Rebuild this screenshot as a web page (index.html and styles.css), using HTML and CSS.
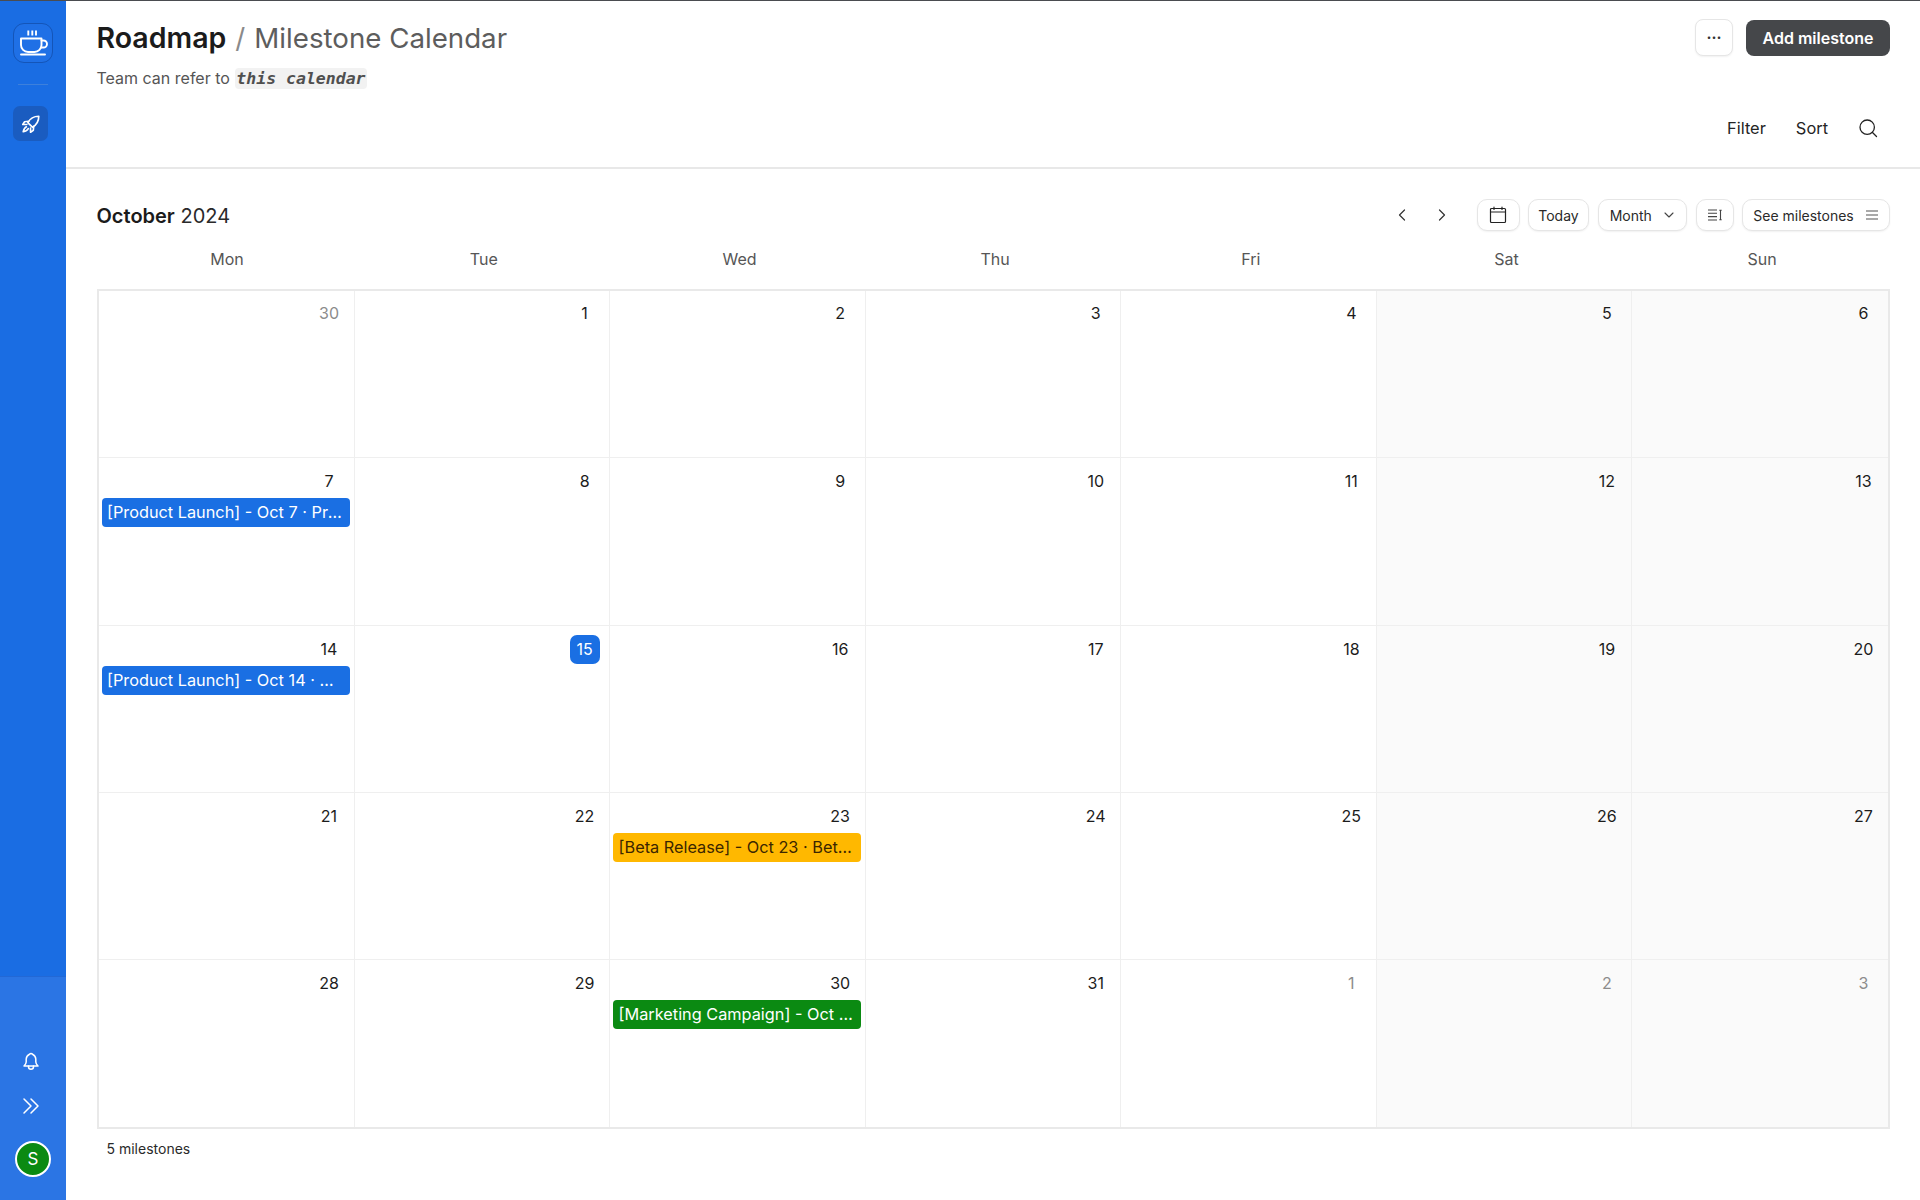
FILE: index.html
```html
<!DOCTYPE html>
<html lang="en">
<head>
<meta charset="utf-8">
<title>Milestone Calendar</title>
<link rel="stylesheet" href="styles.css">
</head>
<body>
<div class="app">
  <aside class="sidebar">
    <div class="side-top">
      <div class="logo">
        <svg width="30" height="30" viewBox="0 0 30 30" fill="none" stroke="#fff" stroke-width="1.900" stroke-linecap="round" stroke-linejoin="round"><path d="M3 10.500h20.500v6.500a7 7 0 0 1-7 7h-6.500a7 7 0 0 1-7-7z"/><path d="M23.500 12.500h2a3.500 3.500 0 0 1 0 7h-2.300"/><path d="M3 26.500h24"/><path d="M10.300 2.500v5M14.300 2.500v5M18 2.500v5" stroke-linecap="butt"/></svg>
      </div>
      <div class="side-rule"></div>
      <div class="nav-active">
        <svg width="22" height="22" viewBox="0 0 24 24" fill="none" stroke="#fff" stroke-width="1.800" stroke-linecap="round" stroke-linejoin="round"><path d="M20.500 3.500C15 3.500 11 6 8.500 10.500l5 5C18 13 20.500 9 20.500 3.500z"/><path d="M9.500 9L5 9.500 3 12.500h4.500"/><path d="M15 14.500L14.500 19l-3 2v-4.500"/><path d="M7 15c-2 1-3 3.500-3.500 5.500C5.500 20 8 19 9 17"/></svg>
      </div>
    </div>
    <div class="side-bottom">
      <svg class="side-icon" width="18" height="20" viewBox="0 0 18 20" fill="none" stroke="#fff" stroke-width="1.500" stroke-linecap="round" stroke-linejoin="round"><path d="M7.500 2.200a2 2 0 0 1 3 0a5.500 5.500 0 0 1 3.300 4.800v3c.1 1.500.8 2.700 2.200 4H2c1.400-1.300 2.100-2.500 2.200-4V7a5.500 5.500 0 0 1 3.300-4.800"/><path d="M6.500 14v.8a2.500 2.500 0 0 0 5 0V14"/></svg>
      <svg class="side-icon side-icon-gap" width="18" height="18" viewBox="0 0 18 18" fill="none" stroke="#fff" stroke-width="1.500" stroke-linecap="round" stroke-linejoin="round"><path d="M2 2l7 7-7 7"/><path d="M9 2l7 7-7 7"/></svg>
      <div class="avatar">S</div>
    </div>
  </aside>
  <main class="main">
    <header class="head">
      <div class="head-top">
        <div>
          <h1 class="title"><strong>Roadmap</strong><span class="slash">/</span><span class="sub">Milestone Calendar</span></h1>
          <p class="desc">Team can refer to <code class="code">this calendar</code></p>
        </div>
        <div class="head-actions">
          <button class="more-btn">···</button>
          <button class="add-btn">Add milestone</button>
        </div>
      </div>
      <div class="head-tools">
        <span class="tool">Filter</span>
        <span class="tool">Sort</span>
        <svg width="20" height="20" viewBox="0 0 20 20" fill="none" stroke="#222" stroke-width="1.300" stroke-linecap="round"><circle cx="9.200" cy="9.200" r="7.200"/><path d="M14.500 14.500l4 4"/></svg>
      </div>
    </header>
    <section class="cal">
      <div class="cal-bar">
        <div class="month"><strong>October</strong> 2024</div>
        <div class="cal-controls">
          <svg class="chev" width="12" height="14" viewBox="0 0 12 14" fill="none" stroke="#333" stroke-width="1.200" stroke-linecap="round" stroke-linejoin="round"><path d="M8.500 2L3.500 7l5 5"/></svg>
          <svg class="chev chev-next" width="12" height="14" viewBox="0 0 12 14" fill="none" stroke="#333" stroke-width="1.200" stroke-linecap="round" stroke-linejoin="round"><path d="M3.500 2l5 5-5 5"/></svg>
          <button class="pill pill-cal"><svg width="18" height="18" viewBox="0 0 18 18" fill="none" stroke="#222" stroke-width="1.200" stroke-linecap="round"><rect x="1.500" y="2.500" width="15" height="14" rx="1"/><path d="M1.500 6h15M5 1.200v2.300M13 1.200v2.300"/></svg></button>
          <button class="pill pill-today">Today</button>
          <button class="pill pill-month">Month <svg width="12" height="8" viewBox="0 0 12 8" fill="none" stroke="#444" stroke-width="1.100" stroke-linecap="round" stroke-linejoin="round"><path d="M2 2l4 4 4-4"/></svg></button>
          <button class="pill pill-icon"><svg width="14" height="12" viewBox="0 0 14 12" fill="none" stroke="#444" stroke-width="1.100"><path d="M0 1h9M0 4.300h9M0 7.600h9M0 11h9"/><path d="M12.500 1v10M11.300 1.200h2.400M11.300 10.800h2.400"/></svg></button>
          <button class="pill pill-see">See milestones <svg width="12" height="10" viewBox="0 0 12 10" fill="none" stroke="#555" stroke-width="1.100"><path d="M0 1h12M0 5h12M0 9h12"/></svg></button>
        </div>
      </div>
      <div class="weekdays">
        <div>Mon</div><div>Tue</div><div>Wed</div><div>Thu</div><div>Fri</div><div>Sat</div><div>Sun</div>
      </div>
      <div class="grid">
        <div class="cell"><span class="num muted">30</span></div>
        <div class="cell"><span class="num">1</span></div>
        <div class="cell"><span class="num">2</span></div>
        <div class="cell"><span class="num">3</span></div>
        <div class="cell"><span class="num">4</span></div>
        <div class="cell wknd"><span class="num">5</span></div>
        <div class="cell wknd"><span class="num">6</span></div>

        <div class="cell"><span class="num">7</span><div class="evt blue">[Product Launch] - Oct 7 · Product Launch</div></div>
        <div class="cell"><span class="num">8</span></div>
        <div class="cell"><span class="num">9</span></div>
        <div class="cell"><span class="num">10</span></div>
        <div class="cell"><span class="num">11</span></div>
        <div class="cell wknd"><span class="num">12</span></div>
        <div class="cell wknd"><span class="num">13</span></div>

        <div class="cell"><span class="num">14</span><div class="evt blue">[Product Launch] - Oct 14 · Product Launch</div></div>
        <div class="cell"><span class="num today">15</span></div>
        <div class="cell"><span class="num">16</span></div>
        <div class="cell"><span class="num">17</span></div>
        <div class="cell"><span class="num">18</span></div>
        <div class="cell wknd"><span class="num">19</span></div>
        <div class="cell wknd"><span class="num">20</span></div>

        <div class="cell"><span class="num">21</span></div>
        <div class="cell"><span class="num">22</span></div>
        <div class="cell"><span class="num">23</span><div class="evt amber">[Beta Release] - Oct 23 · Beta Release</div></div>
        <div class="cell"><span class="num">24</span></div>
        <div class="cell"><span class="num">25</span></div>
        <div class="cell wknd"><span class="num">26</span></div>
        <div class="cell wknd"><span class="num">27</span></div>

        <div class="cell last"><span class="num">28</span></div>
        <div class="cell last"><span class="num">29</span></div>
        <div class="cell last"><span class="num">30</span><div class="evt green">[Marketing Campaign] - Oct 30 · Marketing Campaign</div></div>
        <div class="cell last"><span class="num">31</span></div>
        <div class="cell last"><span class="num muted">1</span></div>
        <div class="cell last wknd"><span class="num muted">2</span></div>
        <div class="cell last wknd"><span class="num muted">3</span></div>
      </div>
      <div class="count">5 milestones</div>
    </section>
  </main>
</div>
</body>
</html>
```
FILE: styles.css
```css
* { box-sizing: border-box; }
html, body { margin: 0; height: 100%; }
body { font-family: Inter, "Liberation Sans", sans-serif; color: #1c1c1c; background: #fff; }
button { font-family: inherit; cursor: pointer; }

.app { display: flex; height: 1200px; border-top: 1px solid #4a4c50; overflow: hidden; }

.sidebar { width: 66px; flex: none; background: #1a6de3; display: flex; flex-direction: column; justify-content: space-between; }
.side-top { display: flex; flex-direction: column; align-items: flex-start; padding-top: 22px; }
.logo { width: 40px; height: 40px; margin-left: 13px; border-radius: 11px; border: 1px solid #1455b8; background: #1f70e6; display: flex; align-items: center; justify-content: center; }
.side-rule { width: 30px; height: 1px; background: #3d80dc; margin: 21px 0 0 18px; }
.nav-active { width: 35px; height: 35px; margin: 21px 0 0 13px; border-radius: 7px; background: #1a5cc0; display: flex; align-items: center; justify-content: center; }

.side-bottom { height: 224px; background: #2b75e4; display: flex; flex-direction: column; align-items: center; padding: 76px 0 0; box-shadow: inset 0 1px 0 #2268d6; }
.side-icon { margin-left: -4px; display: block; }
.side-icon-gap { margin-top: 25px; }
.avatar { width: 36px; height: 36px; margin-top: 26px; border-radius: 50%; background: #0b8a12; border: 2px solid #fff; color: #fff; font-size: 17px; display: flex; align-items: center; justify-content: center; }

.main { flex: 1; min-width: 0; display: flex; flex-direction: column; }

.head { height: 168px; flex: none; border-bottom: 2px solid #e8e8e8; padding: 17px 30px 0 30.500px; display: flex; flex-direction: column; }
.head-top { display: flex; justify-content: space-between; align-items: flex-start; }
.title { margin: 0; font-size: 27.700px; line-height: 40px; font-weight: 400; white-space: nowrap; }
.title strong { font-size: 28.500px; font-weight: 600; color: #1b1b1b; }
.slash { margin: 0 9px; color: #8a8a8a; }
.sub { color: #5d5d5d; }
.desc { margin: 6px 0 0; font-size: 16px; line-height: 28px; color: #555; }
.code { font-family: "DejaVu Sans Mono", "Liberation Mono", monospace; font-weight: 700; font-style: italic; font-size: 16.500px; background: #f2f2f2; border-radius: 4px; padding: 1px 1px; margin-left: 1px; color: #4f4f4f; }
.head-actions { display: flex; gap: 13px; align-items: center; padding-top: 1px; }
.more-btn { width: 38px; height: 37px; border: 1px solid #e6e6e6; border-radius: 8px; background: #fff; color: #333; font-size: 15px; font-weight: 700; padding: 0; box-shadow: 0 1px 2px rgba(0,0,0,.06); }
.add-btn { width: 144px; height: 36px; border: 0; border-radius: 8px; background: #45474a; color: #fff; font-size: 16px; font-weight: 600; padding: 0; }
.head-tools { display: flex; justify-content: flex-end; align-items: center; gap: 30px; margin-top: 25px; padding-right: 12px; }
.tool { font-size: 16.400px; color: #242424; }

.cal { flex: 1; padding: 30px 30px 0 30.500px; }
.cal-bar { display: flex; justify-content: space-between; align-items: center; height: 34px; }
.month { font-size: 20px; color: #2a2a2a; }
.month strong { font-weight: 600; color: #1b1b1b; }
.cal-controls { display: flex; align-items: center; gap: 8.500px; margin-bottom: 2px; }
.chev { margin-right: 19.500px; }
.chev-next { margin-right: 20px; }
.pill { height: 32px; border: 1px solid #e6e6e6; border-radius: 10px; background: #fff; color: #2a2a2a; font-size: 14px; padding: 0; white-space: nowrap; display: flex; align-items: center; justify-content: center; gap: 11px; box-shadow: 0 1px 2px rgba(0,0,0,.06); }
.pill-cal { width: 43px; }
.pill-today { width: 61px; }
.pill-month { width: 89.500px; }
.pill-icon { width: 38px; }
.pill-see { width: 148px; gap: 12px; padding-right: 1px; }

.weekdays { display: grid; grid-template-columns: 258px repeat(6, 1fr); height: 42px; align-items: center; text-align: center; color: #565656; font-size: 16px; margin-top: 5px; padding-left: 1.500px; }

.grid { display: grid; grid-template-columns: 256px repeat(6, 1fr); grid-auto-rows: 167.300px; border: 2px solid #e9e9e9; margin-top: 9px; }
.cell { border-right: 1px solid #efefef; border-bottom: 1px solid #efefef; padding: 7.500px 4px 0 3px; min-width: 0; display: flex; flex-direction: column; }
.cell:nth-child(n+8) { padding-top: 9px; }
.cell:nth-child(7n) { border-right: 0; }
.cell.last { border-bottom: 0; }
.wknd { background: #fafafa; }
.num { align-self: flex-end; margin-right: 5.500px; width: 30px; height: 29px; line-height: 29px; text-align: center; font-size: 16px; color: #1c1c1c; border-radius: 7px; }
.muted { color: #8c8c8c; }
.today { background: #1a6fe3; color: #fff; }
.evt { height: 29px; line-height: 29px; margin-top: 2px; border-radius: 4px; padding: 0 7px 0 5.500px; font-size: 16.300px; white-space: nowrap; overflow: hidden; text-overflow: ellipsis; }
.blue { background: #1a6fe3; color: #fff; }
.amber { background: #ffb800; color: #3b2600; }
.green { background: #0b8a12; color: #fff; }

.count { font-size: 14px; color: #2a2a2a; padding: 11px 0 0 10px; }
```
